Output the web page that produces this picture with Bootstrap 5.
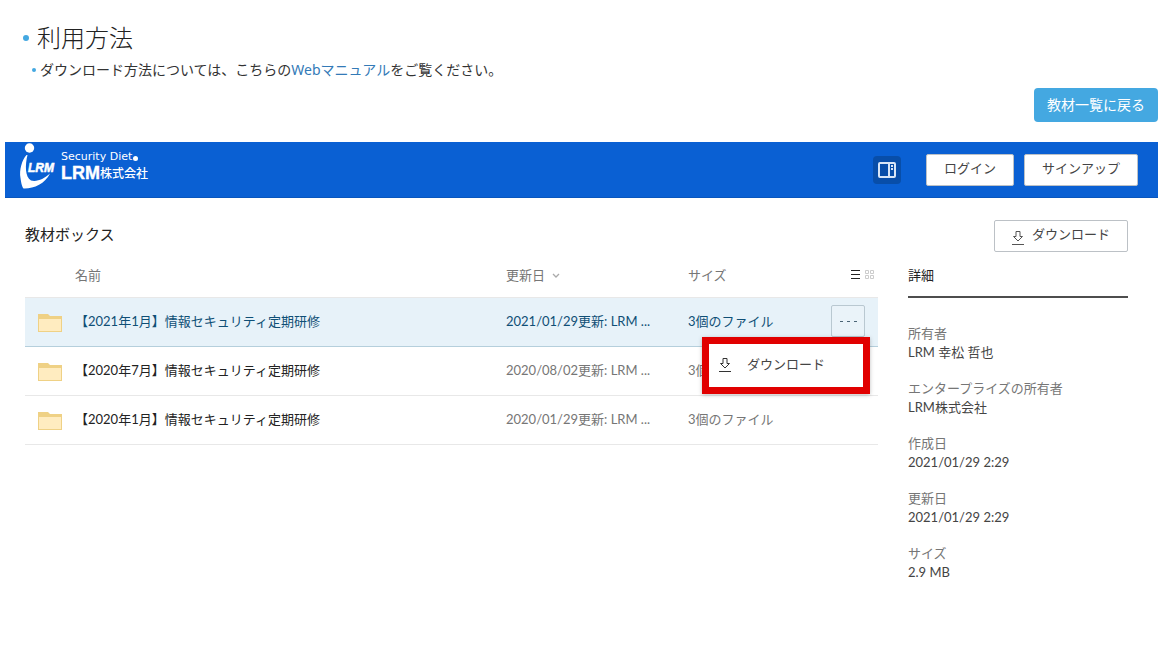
<!DOCTYPE html>
<html lang="ja">
<head>
<meta charset="utf-8">
<meta name="viewport" content="width=device-width, initial-scale=1">
<title>利用方法</title>
<link href="https://cdn.jsdelivr.net/npm/bootstrap@5.3.0/dist/css/bootstrap.min.css" rel="stylesheet">
<style>
body{font-family:"Noto Sans","Noto Sans CJK JP",sans-serif;font-size:14px;line-height:20px;color:#333;padding:20px 9px 20px 5px}
.guide-title{font-size:24px;line-height:36px;font-weight:300;color:#222}
.guide-title::before{content:"";width:6px;height:6px;border-radius:50%;background:#44a8e1;margin:0 8px 0 18px}
.guide-note::before{content:"";width:4px;height:4px;border-radius:50%;background:#44a8e1;margin:0 4px 0 27px}
.guide-note a{color:#337ab7;text-decoration:none}
.btn-back{background:#44a8e1;color:#fff;font-size:14px;line-height:20px;padding:7px 13px;border-radius:4px;border:0}
.btn-back:hover{background:#2f97d2;color:#fff}
.boxapp{font-family:Lato,"Noto Sans CJK JP",sans-serif;font-size:13px;line-height:19px;color:#222}
.topbar{background:#0a60d3;border-bottom:1px solid #0956bd;height:56px;padding:0 20px 0 14px}
.brand{color:#fff;text-decoration:none}
.brand-top{font:11px/12px "DejaVu Sans",sans-serif}
.brand-dot{width:5px;height:5px;border-radius:50%;background:#fff;margin:4px 0 0 1px}
.brand-name{font:bold 18px/20px "Liberation Sans",sans-serif;-webkit-text-stroke:.4px #fff}
.brand-kind{font:500 12px/20px "Noto Sans CJK JP",sans-serif}
.btn-panel{width:28px;height:28px;background:#084ea9;border-radius:4px;border:0;margin-right:25px}
.btn-plain{font-size:13px;line-height:18px;background:#fff;border:1px solid #bcc1c6;border-radius:2px;color:#444;padding:4px 17px 8px;height:32px}
.btn-plain:hover{background:#f4f4f4}
.topbar .btn-plain + .btn-plain{margin-left:10px}
.stage{padding:22px 30px 0 20px}
.stage-title{font-size:15px;line-height:28px;color:#222}
.files{table-layout:fixed;width:100%;border-collapse:separate;border-spacing:0}
.files th{height:45px;padding:1px 0 0;font-weight:400;color:#767676}
.files td{height:49px;padding:0 0 2px;border-bottom:1px solid #e8e8e8;color:#767676;white-space:nowrap}
.files tbody tr:first-child td{height:50px;border-top:1px solid #e8e8e8}
.files tr.picked td{background:#e7f2f9;border-bottom-color:#b5cfdc;color:#0f4f76}
.files td a{color:#222;text-decoration:none}
.files tr.picked td a{color:#0f4f76}
.c-icon{width:50px}.c-date{width:182px}.c-size{width:130px}.c-act{width:60px}
.folder{margin:4px 0 0 13px}
.btn-more{width:34px;height:32px;border:1px solid #b9c8d1;border-radius:2px;background:#eaf3f9;color:#0f4f76;margin-right:13px}
.row-menu{position:absolute;top:39px;right:8px;width:168px;min-width:0;border:7px solid #e10000;border-radius:0;padding:3px 0 5px;box-shadow:0 1px 4px rgba(0,0,0,.25)}
.row-menu .dropdown-item{font-size:13px;line-height:19px;height:35px;color:#444;padding:0 10px}
.details{width:220px;margin-left:30px}
.details h2{font-size:13px;line-height:19px;font-weight:400;padding:14px 0 11px;margin:0 0 26px;border-bottom:2px solid #4e4e4e}
.details dt{font-weight:400;color:#767676}
.details dd{margin:0 0 17px;color:#444}
</style>
</head>
<body>
<header>
  <h1 class="guide-title d-flex align-items-center mb-0">利用方法</h1>
  <p class="guide-note d-flex align-items-center mt-1 mb-0"><span>ダウンロード方法については、こちらの<a href="#">Webマニュアル</a>をご覧ください。</span></p>
</header>
<div class="d-flex justify-content-end pt-2 pb-1 mb-3"><a href="#" class="btn btn-back">教材一覧に戻る</a></div>

<main class="boxapp">
  <nav class="topbar d-flex align-items-center">
    <a href="#" class="brand d-flex align-items-start me-auto">
      <svg width="42" height="54" viewBox="0 1 42 54" fill="#fff" aria-hidden="true">
        <circle cx="10.500" cy="6" r="4.700"/>
        <path d="M7.500 13C3 18 0 28 1.500 36C2 40 3 45 4.500 46.500C14 47 26 42 31 31.500C25 37 18 40 12 38.500C6 35 6 23 8.500 13Z"/>
        <text x="9" y="29.500" font-family="Liberation Sans,sans-serif" font-size="12" font-weight="700" font-style="italic" stroke="#fff" stroke-width=".5">LRM</text>
      </svg>
      <span class="d-flex flex-column pt-2">
        <span class="brand-top d-flex align-items-center">Security Diet<span class="brand-dot"></span></span>
        <span class="d-flex align-items-center"><span class="brand-name">LRM</span><span class="brand-kind">株式会社</span></span>
      </span>
    </a>
    <button class="btn-panel d-flex align-items-center justify-content-center p-0" type="button" aria-label="詳細パネル">
      <svg width="18" height="16" viewBox="0 0 18 16" fill="none" stroke="#d8e6f7" stroke-width="2"><rect x="1" y="1" width="16" height="14" rx="1"/><path d="M11 1V15" /><path d="M13 4h2M13 7h2"/></svg>
    </button>
    <button class="btn btn-plain" type="button">ログイン</button>
    <button class="btn btn-plain" type="button">サインアップ</button>
  </nav>

  <div class="stage">
    <div class="d-flex justify-content-between align-items-start">
      <div class="stage-title">教材ボックス</div>
      <button class="btn btn-plain d-flex align-items-center gap-2" type="button">
        <svg class="mt-2" width="12" height="14" viewBox="0 0 12 14" fill="none" stroke="#555"><path d="M4 .5h4v5h2.500L6 10 1.500 5.500H4zM0 13.500h12"/></svg>ダウンロード
      </button>
    </div>
    <div class="d-flex align-items-start">
      <div class="flex-grow-1">
        <table class="files">
          <colgroup><col class="c-icon"><col><col class="c-date"><col class="c-size"><col class="c-act"></colgroup>
          <thead>
            <tr>
              <th></th><th>名前</th>
              <th>更新日 <svg class="ms-1" width="8" height="6" viewBox="0 0 8 6" fill="none" stroke="#aaa" stroke-width="1.300"><path d="M1 1l3 3 3-3"/></svg></th>
              <th>サイズ</th>
              <th>
                <div class="d-flex justify-content-end align-items-center gap-1 pe-1">
                  <button class="btn p-0 border-0 d-flex" type="button" aria-label="リスト表示"><svg width="10" height="10" viewBox="0 0 10 10" stroke="#222"><path d="M0 .5h9M0 4.500h9M0 8.500h9"/></svg></button>
                  <button class="btn p-0 border-0 d-flex" type="button" aria-label="グリッド表示"><svg width="9" height="10" viewBox="0 0 9 10" fill="none" stroke="#ccc"><path d="M.5.5h3v3h-3zM5.500.5h3v3h-3zM.5 5.500h3v3h-3zM5.500 5.500h3v3h-3z"/></svg></button>
                </div>
              </th>
            </tr>
          </thead>
          <tbody>
            <tr class="picked">
              <td><svg class="folder" width="24" height="18" viewBox="0 0 24 18"><path d="M0 18V0h10l2 2h12v16z" fill="#efd185"/><path d="M1 5h22v12H1z" fill="#ffecc0"/></svg></td>
              <td><a href="#">【2021年1月】情報セキュリティ定期研修</a></td><td>2021/01/29更新: LRM ...</td><td>3個のファイル</td>
              <td class="position-relative">
                <button class="btn btn-more d-flex align-items-center justify-content-center p-0 ms-auto" type="button" aria-label="その他"><svg width="18" height="3" viewBox="0 0 18 3" stroke="#4b6475"><path d="M1 1.500h3M8 1.500h3M15 1.500h3"/></svg></button>
                <div class="row-menu dropdown-menu show">
                  <button class="dropdown-item d-flex align-items-center" type="button"><svg class="me-3" width="12" height="14" viewBox="0 0 12 14" fill="none" stroke="#333"><path d="M4 .5h4v5h2.500L6 10 1.500 5.500H4zM0 13.500h12"/></svg>ダウンロード</button>
                </div>
              </td>
            </tr>
            <tr>
              <td><svg class="folder" width="24" height="18" viewBox="0 0 24 18"><path d="M0 18V0h10l2 2h12v16z" fill="#efd185"/><path d="M1 5h22v12H1z" fill="#ffecc0"/></svg></td>
              <td><a href="#">【2020年7月】情報セキュリティ定期研修</a></td><td>2020/08/02更新: LRM ...</td><td>3個のファイル</td><td></td>
            </tr>
            <tr>
              <td><svg class="folder" width="24" height="18" viewBox="0 0 24 18"><path d="M0 18V0h10l2 2h12v16z" fill="#efd185"/><path d="M1 5h22v12H1z" fill="#ffecc0"/></svg></td>
              <td><a href="#">【2020年1月】情報セキュリティ定期研修</a></td><td>2020/01/29更新: LRM ...</td><td>3個のファイル</td><td></td>
            </tr>
          </tbody>
        </table>
      </div>
      <aside class="details flex-shrink-0">
        <h2>詳細</h2>
        <dl class="mb-0">
          <dt>所有者</dt><dd>LRM 幸松 哲也</dd>
          <dt>エンタープライズの所有者</dt><dd>LRM株式会社</dd>
          <dt>作成日</dt><dd>2021/01/29 2:29</dd>
          <dt>更新日</dt><dd>2021/01/29 2:29</dd>
          <dt>サイズ</dt><dd>2.9 MB</dd>
        </dl>
      </aside>
    </div>
  </div>
</main>
<script src="https://cdn.jsdelivr.net/npm/bootstrap@5.3.0/dist/js/bootstrap.bundle.min.js"></script>
</body>
</html>
